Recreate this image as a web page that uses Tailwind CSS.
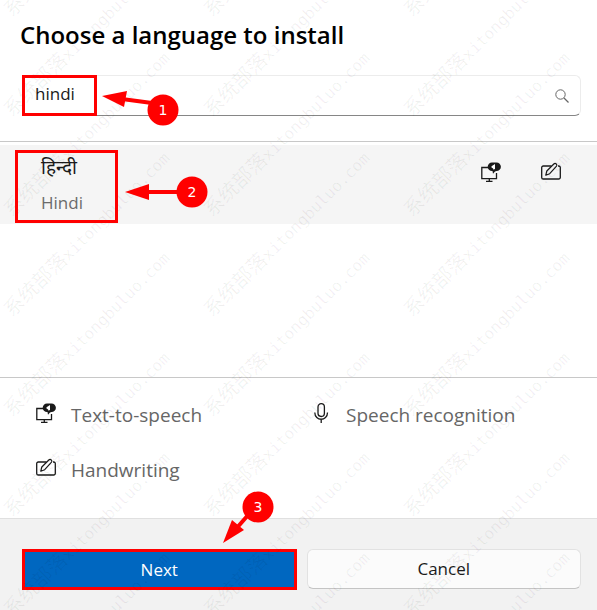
<!DOCTYPE html>
<html lang="en">
<head>
  <meta charset="UTF-8">
  <meta name="viewport" content="width=device-width, initial-scale=1.0">
  <title>Choose a language to install</title>
  <script src="https://cdn.jsdelivr.net/npm/@tailwindcss/browser@4"></script>
</head>
<body class="bg-white font-['Open_Sans','Noto_Sans',sans-serif] text-[#1a1a1a]">
  <!-- Shared icons -->
  <svg class="hidden">
    <symbol id="icon-speech" viewBox="0 0 20 20">
      <path d="M7.500 5.500H.8v11.200H15.500V11" fill="none" stroke="currentColor" stroke-width="1.300"/>
      <path d="M8.300 16.700v2.300M5 19.300h6.500" fill="none" stroke="currentColor" stroke-width="1.300"/>
      <path d="M11 .5h4.500a4.400 4.300 0 0 1 0 8.600l-1.500.4-2 2.200-.5-2.600H11a4.300 4.300 0 0 1 0-8.600z" fill="currentColor"/>
      <path d="M10.500 4.200L14 2v5.500l-1.200-.8v1.500l-1-2-1.300-.6z" fill="#fff"/>
    </symbol>
    <symbol id="icon-pen" viewBox="0 0 20 20">
      <path d="M10.500 4H2.300A1.600 1.600 0 0 0 .7 5.600v9.800A1.600 1.600 0 0 0 2.300 17h15.400a1.600 1.600 0 0 0 1.600-1.600V5.600A1.600 1.600 0 0 0 17.700 4H17" fill="none" stroke="currentColor" stroke-width="1.300"/>
      <path d="M4.800 13.200l1-4.200L12.800 2a1.700 1.700 0 0 1 2.500 2.400L8.700 11.700z" fill="none" stroke="currentColor" stroke-width="1.200" stroke-linejoin="round"/>
    </symbol>
    <symbol id="icon-mic" viewBox="0 0 20 20">
      <rect x="7" y="0.700" width="6.400" height="12.800" rx="3.200" fill="none" stroke="currentColor" stroke-width="1.300"/>
      <path d="M3.800 9.500c0 9 12.700 9 12.700 0M10.200 16.300V20" fill="none" stroke="currentColor" stroke-width="1.300"/>
    </symbol>
    <symbol id="icon-search" viewBox="0 0 14 14">
      <circle cx="5.500" cy="5.500" r="4.700" fill="none" stroke="currentColor"/>
      <path d="M9 9l4.500 4.500" stroke="currentColor" stroke-width="1.200"/>
    </symbol>
  </svg>

  <main class="relative flex min-h-screen flex-col overflow-hidden">
    <header class="px-5 pt-[19px]">
      <h1 class="text-2xl leading-8 font-semibold text-black">Choose a language to install</h1>
    </header>

    <!-- Search -->
    <div class="mt-6 mr-4 ml-[22px] flex h-[41px] items-center rounded-md border border-[#ececec] border-b-[#868686]">
      <input type="text" value="hindi" aria-label="Search for a language" class="h-full min-w-0 flex-1 bg-transparent px-3 pb-1 text-[17px] outline-none">
      <button type="button" aria-label="Search" class="px-[11px] text-[#666]">
        <svg class="size-[14px]"><use href="#icon-search"/></svg>
      </button>
    </div>

    <!-- Results -->
    <section class="mt-[25px] min-h-[237px] border-y border-[#c8c8c8] pt-[3px]">
      <div class="flex h-[79px] items-start justify-between bg-[#f5f5f5] pr-9 pl-[41px]">
        <div>
          <p lang="hi" class="pt-2 text-[19px] leading-7">हिन्दी</p>
          <p class="pt-2 text-[17px] leading-7 text-[#6b6b6b]">Hindi</p>
        </div>
        <div class="flex gap-10 pt-[17px]">
          <svg class="size-5"><use href="#icon-speech"/></svg>
          <svg class="size-5"><use href="#icon-pen"/></svg>
        </div>
      </div>
    </section>

    <!-- Feature legend -->
    <ul class="grid grid-cols-2 gap-y-[27px] pt-[23px] pr-[11px] pb-[34px] pl-9 text-[19px] leading-7 text-[#666]">
      <li class="flex gap-[15px]"><svg class="mt-0.5 size-5 text-[#1a1a1a]"><use href="#icon-speech"/></svg>Text-to-speech</li>
      <li class="flex gap-[15px]"><svg class="mt-0.5 size-5 text-[#1a1a1a]"><use href="#icon-mic"/></svg>Speech recognition</li>
      <li class="flex gap-[15px]"><svg class="mt-0.5 size-5 text-[#1a1a1a]"><use href="#icon-pen"/></svg>Handwriting</li>
    </ul>

    <footer class="grid flex-1 grid-cols-2 items-start gap-[10px] border-t border-[#e0e0e0] bg-[#f2f2f2] pt-[30px] pr-4 pb-5 pl-[22px]">
      <button type="button" class="h-[41px] border-3 border-[#ff0000] bg-[#0067c0] text-[17px] text-white">Next</button>
      <button type="button" class="h-10 rounded-md border border-[#e2e2e2] border-b-[#c4c4c4] bg-[#fbfbfb] text-[17px]">Cancel</button>
    </footer>

    <!-- Watermark -->
    <svg id="watermark" aria-hidden="true" class="pointer-events-none absolute inset-0 size-full fill-black/6"></svg>

    <!-- Step markers -->
    <svg class="pointer-events-none absolute inset-0 size-full" fill="#ff0000" stroke="none">
      <g fill="none" stroke="#ff0000" stroke-width="3">
        <rect x="23.500" y="76.500" width="72" height="38"/>
        <rect x="16.500" y="151.500" width="100" height="70"/>
      </g>
      <g stroke="#ff0000" stroke-width="4">
        <path d="M122 99l30 4"/>
        <path d="M146 192h35"/>
        <path d="M235 530l14-16"/>
      </g>
      <path d="M102 96l25-5-3 16z"/>
      <path d="M125 192l24-8v16z"/>
      <path d="M223 543l9-23 12 10z"/>
      <circle cx="163" cy="110" r="15.500"/>
      <circle cx="192" cy="192" r="15.500"/>
      <circle cx="258" cy="507" r="15.500"/>
      <g fill="#fff" text-anchor="middle" class="font-['DejaVu_Sans',sans-serif] text-[14px]">
        <text x="163" y="115">1</text>
        <text x="192" y="197">2</text>
        <text x="258" y="512">3</text>
      </g>
    </svg>
  </main>

  <script>
    const watermark = document.getElementById('watermark');
    let marks = '';
    for (let y = 18; y < window.innerHeight + 200; y += 100) {
      for (let x = 12; x < window.innerWidth; x += 200) {
        marks += `<text transform="translate(${x} ${y}) rotate(-45)"><tspan class="font-['Noto_Sans_CJK_SC',sans-serif] text-[20px]">系统部落</tspan><tspan class="font-['DejaVu_Sans_Mono',monospace] text-[16px]">xitongbuluo.com</tspan></text>`;
      }
    }
    watermark.innerHTML = marks;
  </script>
</body>
</html>
